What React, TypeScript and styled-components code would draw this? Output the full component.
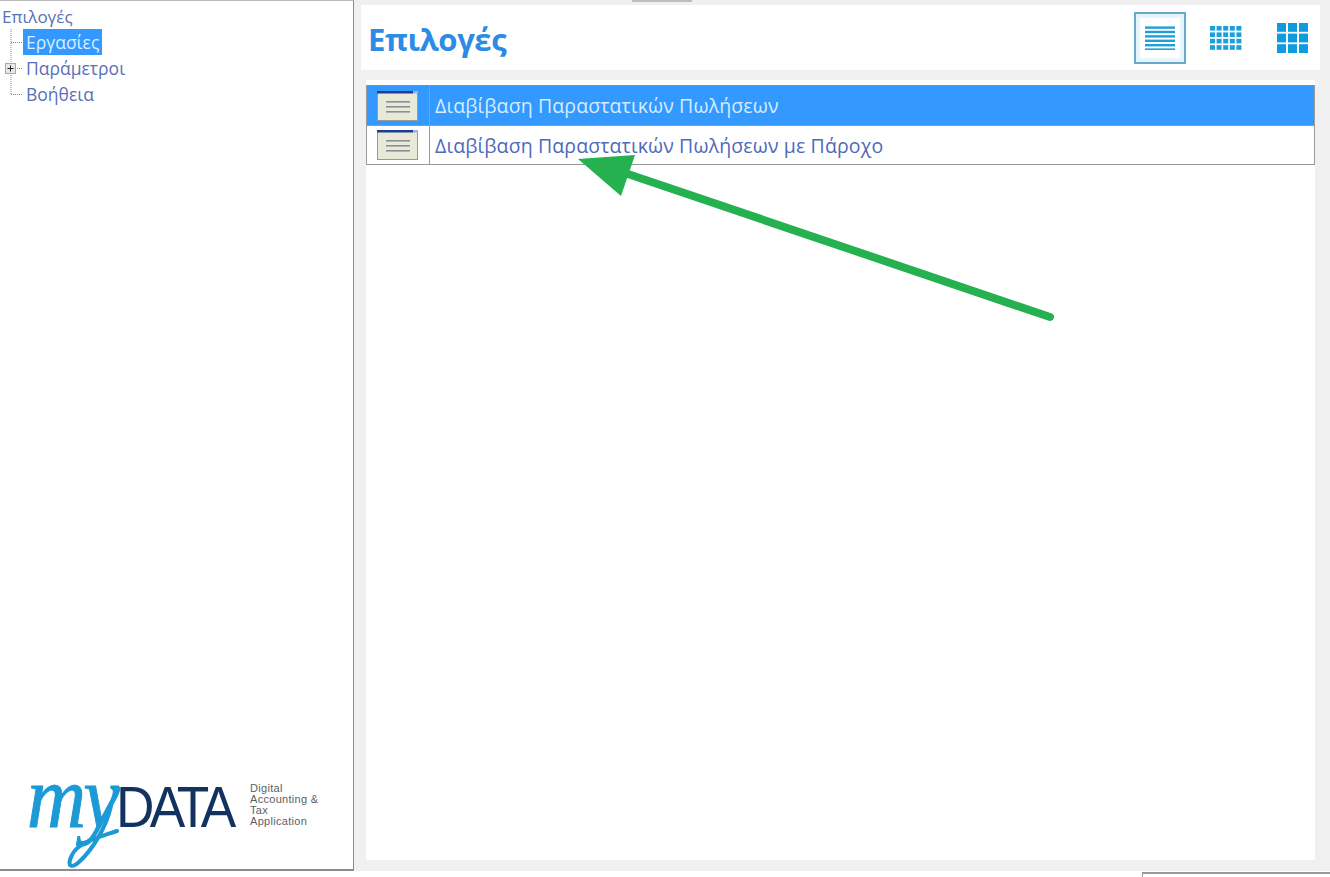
import React from 'react';
import styled, { createGlobalStyle } from 'styled-components';

const Global = createGlobalStyle`
  html, body { margin: 0; padding: 0; background: #fff; overflow: hidden; }
  * { box-sizing: border-box; }
`;

const Page = styled.div`
  position: relative;
  width: 1330px;
  height: 877px;
  display: flex;
  flex-direction: column;
  overflow: hidden;
  background: #fff;
  font-family: "Open Sans", "Noto Sans", "Liberation Sans", sans-serif;
`;
const Workspace = styled.div`
  flex: 0 0 871px;
  display: flex;
  min-height: 0;
`;
const Sidebar = styled.aside`
  flex: 0 0 354px;
  display: flex;
  flex-direction: column;
  background: #fff;
  border-top: 1px solid #b9b9b9;
  border-right: 1px solid #8c8c8c;
  border-bottom: 2px solid #8c8c8c;
  padding-top: 3px;
`;
const TreeRoot = styled.div`
  height: 25px;
  padding-left: 2px;
  font-size: 17px;
  line-height: 25px;
  color: #5a6fb8;
`;
const TreeRow = styled.div`
  height: 26px;
  display: flex;
  align-items: center;
`;
const Connector = styled.svg`
  flex: 0 0 23px;
  display: block;
`;
const TreeLabel = styled.span<{ $selected?: boolean }>`
  height: 26px;
  padding: 0 3px;
  font-size: 17.5px;
  line-height: 26px;
  color: ${p => (p.$selected ? '#d8efff' : '#5a6fb8')};
  background: ${p => (p.$selected ? '#3399ff' : 'transparent')};
`;
const Logo = styled.div`
  position: relative;
  margin-top: auto;
  height: 103px;
  margin-bottom: 0;
  padding-left: 27px;
  display: flex;
  align-items: flex-start;
`;
const Wordmark = styled.div`
  display: flex;
  align-items: baseline;
  height: 88px;
`;
const My = styled.span`
  font-family: "Liberation Serif", serif;
  font-style: italic;
  font-size: 88px;
  line-height: 64px;
  color: #1c9ad6;
  width: 89px;
  letter-spacing: -3px;
  -webkit-text-stroke: 1px #1c9ad6;
  transform: scaleX(0.93);
  transform-origin: left;
`;
const DataMark = styled.span`
  font-family: "Liberation Sans", sans-serif;
  font-size: 57px;
  line-height: 64px;
  color: #12335f;
  letter-spacing: -5px;
  width: 122px;
  transform: scaleX(0.935);
  transform-origin: left;
`;
const Swash = styled.svg`
  position: absolute;
  left: 0;
  top: 0;
`;
const Tagline = styled.div`
  margin: 0 0 0 12px;
  padding-top: 17px;
  font-family: "Liberation Sans", sans-serif;
  font-size: 11px;
  line-height: 11px;
  color: #5a5f66;
  letter-spacing: 0.3px;
`;
const Main = styled.main`
  flex: 1;
  display: flex;
  flex-direction: column;
  background: #f0f0f0;
  padding: 5px 10px 11px 7px;
  min-width: 0;
`;
const Header = styled.header`
  flex: 0 0 65px;
  display: flex;
  align-items: center;
  justify-content: space-between;
  background: #fff;
  padding: 0 2px 0 7px;
`;
const Title = styled.h1`
  margin: 0;
  padding-top: 3px;
  font-size: 31px;
  font-weight: 700;
  letter-spacing: -0.4px;
  color: #2b8be6;
  font-family: "Open Sans", sans-serif;
`;
const Views = styled.div`
  display: flex;
  gap: 14px;
`;
const ViewButton = styled.button<{ $active?: boolean }>`
  width: 52px;
  height: 52px;
  padding: 0;
  display: flex;
  align-items: center;
  justify-content: center;
  background: ${p => (p.$active ? '#fff' : 'transparent')};
  border: ${p => (p.$active ? '2px solid #6aa9c8' : '2px solid transparent')};
  box-shadow: ${p => (p.$active ? 'inset 0 0 0 4px #e6f4fd' : 'none')};
`;
const Content = styled.section`
  flex: 1;
  margin: 10px 5px 0 5px;
  padding-top: 5px;
  background: #fff;
`;
const List = styled.div`
  border: 1px solid #9a9a9a;
  border-top-color: #8b8b8b;
`;
const ListRow = styled.div<{ $active?: boolean }>`
  height: ${p => (p.$active ? '39px' : '38px')};
  display: flex;
  align-items: center;
  background: ${p => (p.$active ? '#3399ff' : '#fff')};
  color: ${p => (p.$active ? '#d6ecff' : '#4e6ab8')};
  & + & { border-top: 1px solid #9a9a9a; height: 39px; }
`;
const IconCell = styled.div`
  flex: 0 0 63px;
  align-self: stretch;
  display: flex;
  align-items: center;
  justify-content: center;
  border-right: 1px solid #9a9a9a;
`;
const RowLabel = styled.span`
  padding-left: 5px;
  font-size: 19.5px;
  letter-spacing: 0.12px;
`;
const BottomStrip = styled.footer`
  flex: 1;
  display: flex;
  justify-content: flex-end;
  padding-top: 1px;
`;
const BottomTab = styled.div`
  width: 188px;
  border-top: 2px solid #9a9a9a;
  border-left: 1px solid #9a9a9a;
`;
const TopNotch = styled.div`
  position: absolute;
  left: 632px;
  top: 0;
  width: 60px;
  height: 2px;
  background: #bdbdbd;
`;
const ArrowOverlay = styled.svg`
  position: absolute;
  left: 0;
  top: 0;
  pointer-events: none;
`;

const TreeLines = ({ last, plus }: { last?: boolean; plus?: boolean }) => (
  <Connector width="23" height="26" viewBox="0 0 23 26">
    <line x1="11" y1="0" x2="11" y2={last ? 13 : 26} stroke="#8a8a8a" strokeDasharray="1 1" />
    <line x1="11" y1="13.5" x2="23" y2="13.5" stroke="#8a8a8a" strokeDasharray="1 1" />
    {plus && (
      <g>
        <rect x="5.5" y="8.5" width="10" height="10" fill="#e8e8e8" stroke="#a8a8a8" />
        <line x1="7.5" y1="13.5" x2="13.5" y2="13.5" stroke="#222" />
        <line x1="10.5" y1="10.5" x2="10.5" y2="16.5" stroke="#222" />
      </g>
    )}
  </Connector>
);

const WindowIcon = () => (
  <svg width="42" height="30" viewBox="0 0 42 30">
    <rect x="0.5" y="1.5" width="40" height="28" fill="#e9e9da" stroke="#9a9a92" />
    <rect x="0" y="0" width="36" height="2.5" fill="#1c3f94" />
    <rect x="36" y="0" width="5" height="2.5" fill="#9fb2d4" />
    <rect x="9" y="10" width="24" height="1.6" fill="#8c9096" />
    <rect x="9" y="15" width="24" height="1.6" fill="#8c9096" />
    <rect x="9" y="20" width="24" height="1.6" fill="#8c9096" />
  </svg>
);

const LinesIcon = () => (
  <svg width="30" height="24" viewBox="0 0 30 24">
    {[0, 1, 2, 3, 4, 5].map(i => (
      <rect key={i} x="0" y={i * 4.4 + 0.4} width="30" height="2.4" fill="#1f9fd8" />
    ))}
  </svg>
);

const SmallGridIcon = () => (
  <svg width="32" height="24" viewBox="0 0 32 24">
    {[0, 1, 2, 3].flatMap(r =>
      [0, 1, 2, 3, 4].map(c => (
        <rect key={`${r}-${c}`} x={c * 6.6} y={r * 6.4} width="5" height="4.6" fill="#1f9fd8" />
      ))
    )}
  </svg>
);

const BigGridIcon = () => (
  <svg width="31" height="30" viewBox="0 0 31 30">
    {[0, 1, 2].flatMap(r =>
      [0, 1, 2].map(c => (
        <rect key={`${r}-${c}`} x={c * 11} y={r * 10.6} width="9" height="8.8" fill="#0f9be0" />
      ))
    )}
  </svg>
);

export default function App() {
  return (
    <Page>
      <Global />
      <Workspace>
        <Sidebar>
          <TreeRoot>Επιλογές</TreeRoot>
          <TreeRow>
            <TreeLines />
            <TreeLabel $selected>Εργασίες</TreeLabel>
          </TreeRow>
          <TreeRow>
            <TreeLines plus />
            <TreeLabel>Παράμετροι</TreeLabel>
          </TreeRow>
          <TreeRow>
            <TreeLines last />
            <TreeLabel>Βοήθεια</TreeLabel>
          </TreeRow>
          <Logo>
            <Wordmark>
              <My>my</My>
              <DataMark>DATA</DataMark>
            </Wordmark>
            <Tagline>
              Digital
              <br />
              Accounting &amp;
              <br />
              Tax
              <br />
              Application
            </Tagline>
            <Swash width="130" height="103" viewBox="0 0 130 103">
              <path
                d="M111 40 C106 62 92 84 80 95 C72 103 66 101 72 89 C78 76 100 71 117 65"
                fill="none"
                stroke="#1c9ad6"
                strokeWidth="4"
                strokeLinecap="round"
              />
            </Swash>
          </Logo>
        </Sidebar>
        <Main>
          <Header>
            <Title>Επιλογές</Title>
            <Views>
              <ViewButton $active>
                <LinesIcon />
              </ViewButton>
              <ViewButton>
                <SmallGridIcon />
              </ViewButton>
              <ViewButton>
                <BigGridIcon />
              </ViewButton>
            </Views>
          </Header>
          <Content>
            <List>
              <ListRow $active>
                <IconCell>
                  <WindowIcon />
                </IconCell>
                <RowLabel>Διαβίβαση Παραστατικών Πωλήσεων</RowLabel>
              </ListRow>
              <ListRow>
                <IconCell>
                  <WindowIcon />
                </IconCell>
                <RowLabel>Διαβίβαση Παραστατικών Πωλήσεων με Πάροχο</RowLabel>
              </ListRow>
            </List>
          </Content>
        </Main>
      </Workspace>
      <BottomStrip>
        <BottomTab />
      </BottomStrip>
      <TopNotch />
      <ArrowOverlay width="1330" height="877" viewBox="0 0 1330 877">
        <line x1="1050" y1="317" x2="625" y2="173" stroke="#25b14f" strokeWidth="8" strokeLinecap="round" />
        <polygon points="578,159 635,155 621,196" fill="#25b14f" />
      </ArrowOverlay>
    </Page>
  );
}
